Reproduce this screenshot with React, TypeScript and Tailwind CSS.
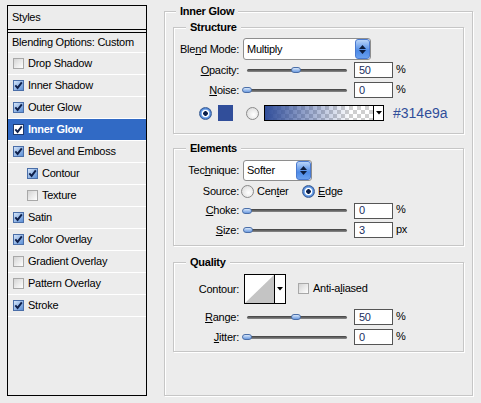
import React from "react";

type Row = { label: string; checked: boolean; selected?: boolean; indent?: boolean };

const rows: Row[] = [
  { label: "Drop Shadow", checked: false },
  { label: "Inner Shadow", checked: true },
  { label: "Outer Glow", checked: true },
  { label: "Inner Glow", checked: true, selected: true },
  { label: "Bevel and Emboss", checked: true },
  { label: "Contour", checked: true, indent: true },
  { label: "Texture", checked: false, indent: true },
  { label: "Satin", checked: true },
  { label: "Color Overlay", checked: true },
  { label: "Gradient Overlay", checked: false },
  { label: "Pattern Overlay", checked: false },
  { label: "Stroke", checked: true },
];

function Check({ checked, light }: { checked: boolean; light?: boolean }) {
  const cls = checked
    ? light
      ? "border-[#1c3a70] bg-white"
      : "border-[#4a6ea8] bg-[linear-gradient(135deg,#d4e4f8,#5c8fd6)]"
    : "border-[#a8a8a8] bg-[linear-gradient(135deg,#d4d4d4,#ffffff)]";
  return (
    <span className={`w-[11px] h-[11px] shrink-0 border flex items-center justify-center ${cls}`}>
      {checked && (
        <svg width="9" height="9" viewBox="0 0 9 9">
          <path d="M1.3 4.3 L3.6 6.9 L7.8 1.4" stroke="#0e1f4a" strokeWidth="1.9" fill="none" />
        </svg>
      )}
    </span>
  );
}

function Radio({ checked }: { checked: boolean }) {
  return checked ? (
    <span className="block w-[13px] h-[13px] shrink-0 rounded-full border border-[#3d5f94] bg-[radial-gradient(circle,#0b1f4a_0_2px,#ffffff_2.6px_3.4px,#7fb0ee_4px,#2f64c0_6px)]" />
  ) : (
    <span className="block w-[13px] h-[13px] shrink-0 rounded-full border border-[#8a8a8a] bg-[radial-gradient(circle_at_60%_60%,#ffffff,#d6d6d6)]" />
  );
}

function Spinner() {
  return (
    <span className="w-[15px] h-full shrink-0 rounded-[3px] border border-[#4a7ad0] bg-[linear-gradient(#b9d4f8,#4d8ae6_60%,#6aa0ee)] flex flex-col items-center justify-center gap-[1px]">
      <svg width="7" height="4" viewBox="0 0 7 4">
        <path d="M0 4 L3.5 0 L7 4 Z" fill="#0d1d3d" />
      </svg>
      <svg width="7" height="4" viewBox="0 0 7 4">
        <path d="M0 0 L3.5 4 L7 0 Z" fill="#0d1d3d" />
      </svg>
    </span>
  );
}

function Slider({ pct }: { pct: number }) {
  return (
    <div className="relative w-[100px] h-[10px] flex items-center shrink-0">
      <div className="w-full h-[3px] rounded-full bg-[linear-gradient(#3e3e3e,#8c8c8c)]" />
      <div
        className="absolute top-[2px] w-[10px] h-[6px] rounded-full border border-[#4b6fa8] bg-[linear-gradient(#d6e6fa,#6d9be0)]"
        style={{ left: -5 + pct * 0.98 }}
      />
    </div>
  );
}

function Field({ value }: { value: string }) {
  return (
    <div className="w-[39px] h-[16px] shrink-0 bg-white border border-[#555] pl-[4px] flex items-center leading-none text-[#1b2f5f]">
      {value}
    </div>
  );
}

function Label({ children }: { children: React.ReactNode }) {
  return <div className="w-[65px] shrink-0 text-right whitespace-nowrap">{children}</div>;
}

function SliderRow({
  label,
  pct,
  value,
  unit,
  h,
  mt,
}: {
  label: React.ReactNode;
  pct: number;
  value: string;
  unit: string;
  h: string;
  mt?: string;
}) {
  return (
    <div className={`flex items-center ${h} ${mt ?? ""}`}>
      <Label>{label}</Label>
      <div className="ml-[8px]">
        <Slider pct={pct} />
      </div>
      <div className="ml-[7px]">
        <Field value={value} />
      </div>
      <span className="ml-[3px] -mt-[2px]">{unit}</span>
    </div>
  );
}

function Group({
  title,
  className,
  titleMl,
  children,
}: {
  title: string;
  className: string;
  titleMl: string;
  children?: React.ReactNode;
}) {
  return (
    <div className={`border border-[#c6c6c6] shadow-[inset_1px_1px_0_#ffffff,1px_1px_0_#ffffff] ${className}`}>
      <div className={`-mt-[7px] ${titleMl} px-[4px] w-fit bg-[#ececec] font-bold text-[11px] leading-[13px]`}>
        {title}
      </div>
      {children}
    </div>
  );
}

export default function App() {
  return (
    <div className="w-[481px] h-[403px] bg-[#ececec] flex overflow-hidden font-['Liberation_Sans',Arial,sans-serif] text-[11px] tracking-[-0.25px] text-black">
      {/* Left styles list */}
      <div className="ml-[7px] mt-[5px] w-[140px] h-[391px] border border-black flex flex-col shrink-0">
        <div className="h-[24px] border-b border-black pl-[4px] flex items-center">Styles</div>
        <div className="mt-[2px] h-[21px] border-t border-black border-b border-b-white pl-[4px] flex items-center">
          Blending Options: Custom
        </div>
        {rows.map((r) => (
          <div
            key={r.label}
            className={`h-[22px] border-b border-white flex items-center gap-[4px] ${r.indent ? "pl-[19px]" : "pl-[5px]"} ${
              r.selected ? "bg-[#316ac5] text-white font-bold" : ""
            }`}
          >
            <Check checked={r.checked} light={r.selected} />
            <span>{r.label}</span>
          </div>
        ))}
      </div>

      {/* Right panel */}
      <Group title="Inner Glow" titleMl="ml-[11px]" className="ml-[17px] mt-[11px] w-[309px] h-[385px] shrink-0">
        <Group title="Structure" titleMl="ml-[12px]" className="mt-[9px] ml-[8px] w-[291px] h-[107px]">
          <div className="mt-[4px] h-[22px] flex items-center">
            <Label>
              Ble<u>n</u>d Mode:
            </Label>
            <div className="ml-[4px] w-[128px] h-[22px] bg-white border border-[#8e8e8e] rounded-[3px] flex items-center">
              <span className="pl-[3px] flex-1">Multiply</span>
              <Spinner />
            </div>
          </div>
          <SliderRow
            label={
              <>
                <u>O</u>pacity:
              </>
            }
            pct={50}
            value="50"
            unit="%"
            h="h-[20px]"
          />
          <SliderRow
            label={
              <>
                <u>N</u>oise:
              </>
            }
            pct={0}
            value="0"
            unit="%"
            h="h-[20px]"
          />
          <div className="mt-[2px] h-[22px] flex items-center">
            <div className="ml-[25px]">
              <Radio checked />
            </div>
            <div className="ml-[6px] w-[15px] h-[16px] bg-[#314e9a]" />
            <div className="ml-[13px]">
              <Radio checked={false} />
            </div>
            <div className="ml-[5px] w-[120px] h-[16px] border border-black flex">
              <div className="flex-1 [background:linear-gradient(to_right,#314e9a,rgba(49,78,154,0.55)_35%,rgba(49,78,154,0)_80%),repeating-conic-gradient(#cfcfcf_0_25%,#ffffff_0_50%)_0_0/8px_8px]" />
              <div className="w-[10px] border-l border-black bg-white flex items-center justify-center">
                <svg width="6" height="4" viewBox="0 0 6 4">
                  <path d="M0 0 L3 3.5 L6 0 Z" fill="#000" />
                </svg>
              </div>
            </div>
            <span className="ml-[9px] text-[14px] tracking-normal text-[#314e9a]">#314e9a</span>
          </div>
        </Group>

        <Group title="Elements" titleMl="ml-[12px]" className="mt-[14px] ml-[8px] w-[291px] h-[98px]">
          <div className="mt-[5px] h-[21px] flex items-center">
            <Label>
              Tec<u>h</u>nique:
            </Label>
            <div className="ml-[4px] w-[69px] h-[21px] bg-white border border-[#8e8e8e] rounded-[3px] flex items-center">
              <span className="pl-[3px] flex-1">Softer</span>
              <Spinner />
            </div>
          </div>
          <div className="h-[20px] flex items-center">
            <Label>Source:</Label>
            <div className="ml-[2px]">
              <Radio checked={false} />
            </div>
            <span className="ml-[3px] w-[45px]">
              Cen<u>t</u>er
            </span>
            <Radio checked />
            <span className="ml-[3px]">
              <u>E</u>dge
            </span>
          </div>
          <SliderRow
            label={
              <>
                <u>C</u>hoke:
              </>
            }
            pct={0}
            value="0"
            unit="%"
            h="h-[19px]"
          />
          <SliderRow
            label={
              <>
                <u>S</u>ize:
              </>
            }
            pct={1}
            value="3"
            unit="px"
            h="h-[20px]"
          />
        </Group>

        <Group title="Quality" titleMl="ml-[12px]" className="mt-[16px] ml-[8px] w-[291px] h-[90px]">
          <div className="mt-[5px] h-[30px] flex items-center">
            <Label>Contour:</Label>
            <div className="ml-[5px] w-[42px] h-[30px] border border-black flex bg-white">
              <svg width="29" height="28" viewBox="0 0 29 28" className="shrink-0">
                <polygon points="0,28 29,0 29,28" fill="#c4c4c4" />
              </svg>
              <div className="flex-1 border-l border-black flex items-center justify-center">
                <svg width="6" height="4" viewBox="0 0 6 4">
                  <path d="M0 0 L3 3.5 L6 0 Z" fill="#000" />
                </svg>
              </div>
            </div>
            <div className="ml-[12px] -mt-[2px] flex items-center gap-[4px]">
              <Check checked={false} />
              <span>
                Anti-a<u>l</u>iased
              </span>
            </div>
          </div>
          <SliderRow
            label={
              <>
                <u>R</u>ange:
              </>
            }
            pct={50}
            value="50"
            unit="%"
            h="h-[18px]"
            mt="mt-[4px]"
          />
          <SliderRow
            label={
              <>
                <u>J</u>itter:
              </>
            }
            pct={0}
            value="0"
            unit="%"
            h="h-[18px]"
            mt="mt-[2px]"
          />
        </Group>
      </Group>
    </div>
  );
}
